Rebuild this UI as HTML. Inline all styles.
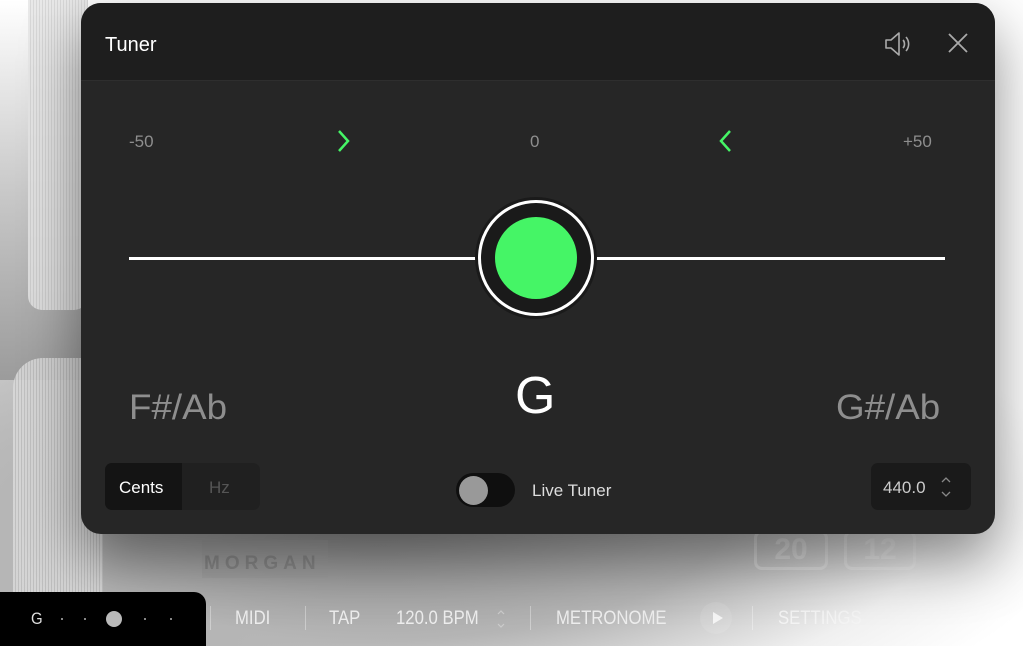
<!DOCTYPE html>
<html><head><meta charset="utf-8"><style>
*{margin:0;padding:0;box-sizing:border-box}
body{width:1023px;height:646px;overflow:hidden;position:relative;background:#fff;font-family:"Liberation Sans",sans-serif}
.bgl{position:absolute;left:0;top:0;width:420px;height:646px;background:linear-gradient(180deg,#fff 0%,#c8c8c8 30%,#8a8a8a 70%,#6a6a6a 100%);-webkit-mask-image:linear-gradient(90deg,#000 55%,transparent 100%);mask-image:linear-gradient(90deg,#000 55%,transparent 100%)}
.bgb{position:absolute;left:0;top:380px;width:1023px;height:266px;background:radial-gradient(ellipse 700px 260px at 380px 130px,#8d8d8d 0%,#b5b5b5 50%,rgba(230,230,230,0.6) 80%,rgba(255,255,255,0) 100%)}
.fab1{position:absolute;left:28px;top:0;width:60px;height:310px;border-radius:0 0 14px 14px;background:repeating-linear-gradient(90deg,#e6e6e6 0 2px,#d2d2d2 2px 3px),#ddd;opacity:.85}
.fab2{position:absolute;left:13px;top:358px;width:90px;height:240px;border-radius:30px 0 0 0;background:repeating-linear-gradient(90deg,#d8d8d8 0 2px,#c0c0c0 2px 3px);opacity:.9}
.panel{position:absolute;left:81px;top:3px;width:914px;height:531px;border-radius:20px;background:#262626;overflow:hidden;box-shadow:0 25px 60px rgba(0,0,0,.45)}
.hdr{height:78px;background:#1e1e1e;border-bottom:1px solid #2e2e2e;position:relative}
.t{position:absolute;color:#fff}
.g{color:#8e8e8e}
.bar{position:absolute;left:0;top:592px;width:206px;height:54px;background:#000;border-radius:0 12px 0 0}
.bt{position:absolute;top:608px;font-size:19px;color:#eee;transform:scaleX(.88);transform-origin:left}
.sep{position:absolute;top:606px;width:1px;height:24px;background:rgba(255,255,255,.35)}
</style></head><body>
<div class="bgl"></div><div class="bgb"></div>
<div class="fab1"></div><div class="fab2"></div>
<div style="position:absolute;left:202px;top:540px;width:126px;height:38px;background:#a0a0a0;opacity:.6"></div>
<div class="t" style="left:204px;top:553px;font-size:19px;font-weight:bold;letter-spacing:5px;color:#8a8a8a">MORGAN</div>
<div style="position:absolute;left:754px;top:530px;width:74px;height:40px;border:3px solid rgba(255,255,255,.3);border-radius:8px;color:rgba(255,255,255,.3);font:bold 30px 'Liberation Sans';text-align:center;line-height:34px">20</div>
<div style="position:absolute;left:844px;top:530px;width:72px;height:40px;border:3px solid rgba(255,255,255,.3);border-radius:8px;color:rgba(255,255,255,.3);font:bold 30px 'Liberation Sans';text-align:center;line-height:34px">12</div>
<div class="bar"></div>
<div class="t" style="left:31px;top:609px;font-size:17px;color:#ddd;transform:scaleX(.88);transform-origin:left">G</div>
<div style="position:absolute;left:106px;top:611px;width:16px;height:16px;border-radius:50%;background:#bbb"></div>
<div style="position:absolute;left:61px;top:618px;width:2px;height:2px;background:#888"></div>
<div style="position:absolute;left:84px;top:618px;width:2px;height:2px;background:#888"></div>
<div style="position:absolute;left:144px;top:618px;width:2px;height:2px;background:#888"></div>
<div style="position:absolute;left:170px;top:618px;width:2px;height:2px;background:#888"></div>
<div class="sep" style="left:210px"></div>
<div class="bt" style="left:235px">MIDI</div>
<div class="sep" style="left:305px"></div>
<div class="bt" style="left:329px">TAP</div>
<div class="bt" style="left:396px">120.0 BPM</div>
<svg style="position:absolute;left:496px;top:608px" width="10" height="22" fill="none" stroke="#ccc" stroke-width="1.2"><path d="M2 6L5 3L8 6M2 16L5 19L8 16"/></svg>
<div class="sep" style="left:530px"></div>
<div class="bt" style="left:556px">METRONOME</div>
<div style="position:absolute;left:700px;top:602px;width:32px;height:32px;border-radius:50%;background:rgba(255,255,255,.1)"></div>
<div style="position:absolute;left:713px;top:612px;border-left:10px solid #f5f5f5;border-top:6px solid transparent;border-bottom:6px solid transparent"></div>
<div class="sep" style="left:752px"></div>
<div class="bt" style="left:778px;color:#f4f4f4">SETTINGS</div>

<div class="panel">
 <div class="hdr">
  <div class="t" style="left:24px;top:31px;font-size:20px">Tuner</div>
  <svg style="position:absolute;left:802px;top:27px" width="30" height="28" viewBox="0 0 30 28" fill="none" stroke="#aaa" stroke-width="1.6" stroke-linejoin="round"><path d="M3 10h5l8-7v22l-8-7H3z"/><path d="M20 10c2 2 2 6 0 8"/><path d="M23 7c3.5 4 3.5 10 0 14"/></svg>
  <svg style="position:absolute;left:867px;top:30px" width="20" height="20" stroke="#aaa" stroke-width="1.8"><path d="M1 1L19 19M19 1L1 19"/></svg>
 </div>
 <div class="t g" style="left:48px;top:129px;font-size:17px">-50</div>
 <div class="t g" style="left:449px;top:129px;font-size:17px">0</div>
 <div class="t g" style="left:822px;top:129px;font-size:17px">+50</div>
 <svg style="position:absolute;left:255px;top:125px" width="16" height="28" fill="none" stroke="#45f566" stroke-width="2.5"><path d="M3 3L12 13L3 23"/></svg>
 <svg style="position:absolute;left:636px;top:125px" width="16" height="28" fill="none" stroke="#45f566" stroke-width="2.5"><path d="M13 3L4 13L13 23"/></svg>
 <div style="position:absolute;left:48px;top:254px;width:816px;height:3px;background:#fff"></div>
 <div style="position:absolute;left:394px;top:194px;width:122px;height:122px;border-radius:50%;background:#1a1a1a"></div>
 <div style="position:absolute;left:397px;top:197px;width:116px;height:116px;border-radius:50%;border:3px solid #fff;background:#1a1a1a"></div>
 <div style="position:absolute;left:414px;top:214px;width:82px;height:82px;border-radius:50%;background:#45f566"></div>
 <div class="t g" style="left:48px;top:385px;font-size:35px;transform:scaleX(1.05);transform-origin:left">F#/Ab</div>
 <div class="t" style="left:434px;top:363px;font-size:52px">G</div>
 <div class="t g" style="left:755px;top:385px;font-size:35px;transform:scaleX(1.05);transform-origin:left">G#/Ab</div>
 <div style="position:absolute;left:24px;top:460px;width:155px;height:47px;border-radius:7px;background:#202020;overflow:hidden">
  <div style="position:absolute;left:0;top:0;width:77px;height:47px;background:#141414"></div>
  <div class="t" style="left:14px;top:15px;font-size:17px">Cents</div>
  <div class="t" style="left:104px;top:15px;font-size:17px;color:#555">Hz</div>
 </div>
 <div style="position:absolute;left:375px;top:470px;width:59px;height:34px;border-radius:17px;background:#0f0f0f"></div>
 <div style="position:absolute;left:378px;top:473px;width:29px;height:29px;border-radius:50%;background:#999"></div>
 <div class="t" style="left:451px;top:478px;font-size:17px;color:#ddd">Live Tuner</div>
 <div style="position:absolute;left:790px;top:460px;width:100px;height:47px;border-radius:7px;background:#1a1a1a"></div>
 <div class="t" style="left:802px;top:475px;font-size:17px;color:#ccc">440.0</div>
 <svg style="position:absolute;left:859px;top:472px" width="12" height="24" fill="none" stroke="#888" stroke-width="1.3"><path d="M2 7L6 3L10 7M2 17L6 21L10 17"/></svg>
</div>
</body></html>
